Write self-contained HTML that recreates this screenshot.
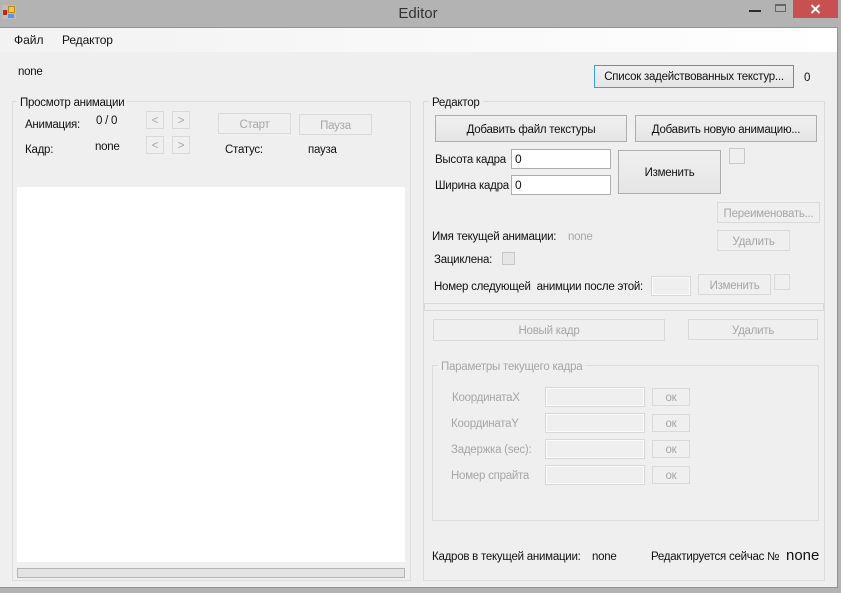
<!DOCTYPE html>
<html><head><meta charset="utf-8"><style>
html,body{margin:0;padding:0;background:#b3b3b3;}
#w{position:relative;width:841px;height:593px;overflow:hidden;background:#b3b3b3;font:11.5px/16px "Liberation Sans",sans-serif;letter-spacing:-.25px;color:#111;}
#w div{position:absolute;box-sizing:border-box;white-space:nowrap;}
.t{height:16px;margin-top:1px;}
.d{color:#a6a6a6;}
.b{border:1px solid #adadad;background:linear-gradient(#f0f0f0,#e5e5e5);text-align:center;display:flex;align-items:center;justify-content:center;padding-top:2px;}
.x{border:1px solid #d9d9d9;background:#efefef;color:#a6a6a6;text-align:center;display:flex;align-items:center;justify-content:center;padding-top:2px;}
.i{border:1px solid #adadad;background:#fff;padding-left:3px;line-height:18px;font-size:12px;letter-spacing:0;}
.j{border:1px solid #d9d9d9;background:#efefef;box-shadow:inset 0 0 0 1px #fbfbfb;}
.g{border:1px solid #dcdcdc;}
.l{background:#efefef;padding:0 3px;height:16px;}
.c{border:1px solid #c8c8c8;background:#efefef;}
</style></head><body><div id="w">
<div style="left:0;top:27px;width:838px;height:561px;background:#efefef;border-top:1px solid #929292;border-right:1px solid #929292;border-bottom:1px solid #929292;"></div>
<div style="left:0;top:28px;width:837px;height:24px;background:linear-gradient(90deg,#f2f2f2,#ffffff);"></div>

<div style="left:2px;top:5px;width:14px;height:14px;background:#bdbdbd;"></div>
<div style="left:8px;top:6px;width:7px;height:7px;background:#f6c633;border:1px solid #b98a10;"></div>
<div style="left:3px;top:10px;width:4px;height:5px;background:#c0251a;"></div>
<div style="left:8px;top:14px;width:6px;height:4px;background:#5b94e6;"></div>
<div style="left:378px;top:5px;width:80px;height:18px;text-align:center;font-size:15px;line-height:18px;letter-spacing:0;color:#333;">Editor</div>
<div style="left:749px;top:10px;width:12px;height:2px;background:#2b2b2b;"></div>
<div style="left:775px;top:4px;width:11px;height:8px;border:1px solid #666;border-top-width:2px;"></div>
<div style="left:793px;top:0;width:45px;height:18px;background:#c75050;"></div>
<svg style="position:absolute;left:810px;top:4px" width="11" height="10"><path d="M1.5 1L9.5 9M9.5 1L1.5 9" stroke="#fff" stroke-width="2" fill="none"/></svg>

<div class="t" style="left:14px;top:31px;font-size:12px;letter-spacing:0;">Файл</div>
<div class="t" style="left:62px;top:31px;font-size:12px;letter-spacing:-.1px;">Редактор</div>
<div class="t" style="left:18px;top:63px;">none</div>

<div class="g" style="left:12px;top:101px;width:399px;height:480px;"></div>
<div class="l" style="left:17px;top:95px;">Просмотр анимации</div>
<div class="t" style="left:25px;top:116px;">Анимация:</div>
<div class="t" style="left:96px;top:112px;">0 / 0</div>
<div class="x" style="left:146px;top:111px;width:18px;height:18px;">&lt;</div>
<div class="x" style="left:172px;top:111px;width:18px;height:18px;">&gt;</div>
<div class="t" style="left:25px;top:141px;">Кадр:</div>
<div class="t" style="left:95px;top:138px;">none</div>
<div class="x" style="left:146px;top:136px;width:18px;height:18px;">&lt;</div>
<div class="x" style="left:172px;top:136px;width:18px;height:18px;">&gt;</div>
<div class="x" style="left:218px;top:113px;width:73px;height:21px;">Старт</div>
<div class="x" style="left:299px;top:114px;width:73px;height:21px;">Пауза</div>
<div class="t" style="left:225px;top:141px;">Статус:</div>
<div class="t" style="left:308px;top:141px;">пауза</div>
<div style="left:17px;top:187px;width:388px;height:375px;background:#fff;"></div>
<div style="left:17px;top:568px;width:388px;height:10px;background:#e3e3e3;border:1px solid #b5b5b5;"></div>

<div style="left:594px;top:65px;width:200px;height:23px;border:1px solid #3c9ae8;background:linear-gradient(#f0f0f0,#e5e5e5);text-align:center;line-height:23px;">Список задействованных текстур...</div>
<div class="t" style="left:804px;top:69px;">0</div>

<div class="g" style="left:423px;top:101px;width:402px;height:480px;"></div>
<div class="l" style="left:429px;top:95px;">Редактор</div>
<div class="b" style="left:435px;top:115px;width:192px;height:27px;">Добавить файл текстуры</div>
<div class="b" style="left:635px;top:115px;width:182px;height:27px;">Добавить новую анимацию...</div>
<div class="t" style="left:435px;top:151px;">Высота кадра</div>
<div class="i" style="left:511px;top:149px;width:100px;height:20px;">0</div>
<div class="t" style="left:435px;top:177px;">Ширина кадра</div>
<div class="i" style="left:511px;top:175px;width:100px;height:20px;">0</div>
<div class="b" style="left:618px;top:150px;width:103px;height:44px;">Изменить</div>
<div class="c" style="left:729px;top:148px;width:16px;height:16px;"></div>
<div class="x" style="left:717px;top:202px;width:103px;height:21px;">Переименовать...</div>
<div class="x" style="left:717px;top:230px;width:73px;height:21px;">Удалить</div>
<div class="t" style="left:432px;top:228px;">Имя текущей анимации:</div>
<div class="t d" style="left:568px;top:228px;">none</div>
<div class="t" style="left:434px;top:251px;">Зациклена:</div>
<div class="c" style="left:502px;top:252px;width:13px;height:13px;background:#e6e6e6;"></div>
<div class="t" style="left:434px;top:278px;">Номер следующей&nbsp; анимции после этой:</div>
<div class="j" style="left:651px;top:276px;width:40px;height:20px;"></div>
<div class="x" style="left:698px;top:274px;width:73px;height:21px;">Изменить</div>
<div style="left:774px;top:274px;width:16px;height:16px;border:1px solid #d9d9d9;"></div>
<div style="left:424px;top:303px;width:400px;height:8px;border:1px solid #d9d9d9;"></div>
<div class="x" style="left:433px;top:319px;width:232px;height:22px;">Новый кадр</div>
<div class="x" style="left:688px;top:319px;width:130px;height:21px;">Удалить</div>

<div class="g" style="left:432px;top:365px;width:387px;height:156px;"></div>
<div class="l d" style="left:438px;top:359px;">Параметры текущего кадра</div>
<div class="t d" style="left:452px;top:389px;">КоординатаX</div>
<div class="j" style="left:545px;top:387px;width:100px;height:20px;"></div>
<div class="x" style="left:652px;top:388px;width:38px;height:18px;">ок</div>
<div class="t d" style="left:451px;top:415px;">КоординатаY</div>
<div class="j" style="left:545px;top:413px;width:100px;height:20px;"></div>
<div class="x" style="left:652px;top:414px;width:38px;height:18px;">ок</div>
<div class="t d" style="left:451px;top:441px;">Задержка (sec):</div>
<div class="j" style="left:545px;top:439px;width:100px;height:20px;"></div>
<div class="x" style="left:652px;top:440px;width:38px;height:18px;">ок</div>
<div class="t d" style="left:451px;top:467px;">Номер спрайта</div>
<div class="j" style="left:545px;top:465px;width:100px;height:20px;"></div>
<div class="x" style="left:652px;top:466px;width:38px;height:18px;">ок</div>

<div class="t" style="left:432px;top:548px;">Кадров в текущей анимации:</div>
<div class="t" style="left:592px;top:548px;">none</div>
<div class="t" style="left:651px;top:548px;">Редактируется сейчас №</div>
<div class="t" style="left:786px;top:547px;font-size:15px;letter-spacing:0;">none</div>
</div></body></html>
